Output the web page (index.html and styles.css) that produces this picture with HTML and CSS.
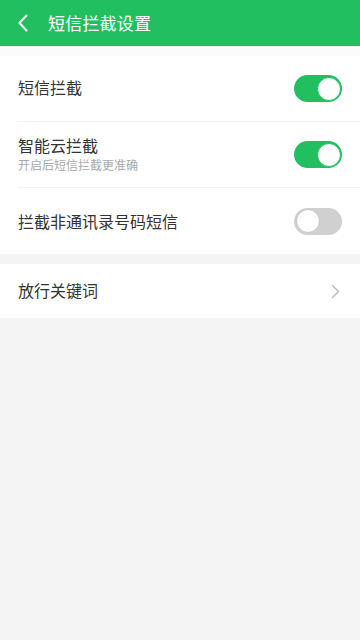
FILE: index.html
```html
<!DOCTYPE html>
<html lang="zh">
<head>
<meta charset="utf-8">
<link rel="stylesheet" href="styles.css">
</head>
<body>
<header class="bar">
  <svg class="back" width="12" height="18" viewBox="0 0 12 18"><path d="M9.5 1.5 L2.5 9 L9.5 16.5" fill="none" stroke="#fff" stroke-width="2" stroke-linecap="round" stroke-linejoin="round"/></svg>
  <span class="title">短信拦截设置</span>
</header>
<div class="topgap"></div>
<section class="group">
  <div class="row lift">
    <div class="label">短信拦截</div>
    <div class="switch on"><span class="knob"></span></div>
  </div>
  <div class="row">
    <div class="texts">
      <div class="label">智能云拦截</div>
      <div class="sub">开启后短信拦截更准确</div>
    </div>
    <div class="switch on"><span class="knob"></span></div>
  </div>
  <div class="row last">
    <div class="label">拦截非通讯录号码短信</div>
    <div class="switch"><span class="knob"></span></div>
  </div>
</section>
<section class="group second">
  <div class="row short last lift">
    <div class="label">放行关键词</div>
    <svg class="chev" width="9" height="15" viewBox="0 0 9 15"><path d="M1.5 1.5 L7.5 7.5 L1.5 13.5" fill="none" stroke="#bdbdbd" stroke-width="1.5" stroke-linecap="round" stroke-linejoin="round"/></svg>
  </div>
</section>
</body>
</html>
```
FILE: styles.css
```css
html, body {
  margin: 0;
  padding: 0;
}
body {
  width: 360px;
  min-height: 640px;
  background: #f4f4f4;
  font-family: "Noto Sans CJK SC", "Noto Sans", sans-serif;
}
.bar {
  height: 46px;
  background: #21bf5f;
  display: flex;
  align-items: center;
  padding-left: 17px;
  padding-bottom: 1px;
  box-sizing: border-box;
}
.back {
  display: block;
}
.title {
  color: #fff;
  font-size: 17px;
  margin-left: 19px;
  letter-spacing: 0.2px;
}
.topgap {
  height: 10px;
  background: #fbfbfb;
}
.group {
  background: #fff;
  padding-left: 18px;
}
.second {
  margin-top: 10px;
}
.row {
  height: 66px;
  display: flex;
  align-items: center;
  justify-content: space-between;
  padding-right: 18px;
  border-bottom: 1px solid #f3f3f3;
  box-sizing: border-box;
}
.row.last {
  border-bottom: none;
}
.row.short {
  height: 54px;
}
.row.lift .label {
  margin-bottom: 3px;
}
.label {
  font-size: 16px;
  color: #333;
  line-height: 22px;
}
.texts {
  margin-bottom: 2px;
}
.sub {
  font-size: 12px;
  color: #a8a8a8;
  line-height: 16px;
  margin-top: 1px;
}
.switch {
  width: 48px;
  height: 27px;
  border-radius: 14px;
  background: #d0d0d0;
  position: relative;
  box-sizing: border-box;
}
.switch .knob {
  position: absolute;
  top: 1.5px;
  left: 1.5px;
  width: 24px;
  height: 24px;
  border-radius: 50%;
  background: #fff;
  box-sizing: border-box;
  border: 1px solid #c4c4c4;
}
.switch.on {
  background: #21bf5f;
}
.switch.on .knob {
  left: auto;
  right: 1.5px;
  border-color: #21bf5f;
}
.chev {
  display: block;
  margin-right: 2px;
}
```
